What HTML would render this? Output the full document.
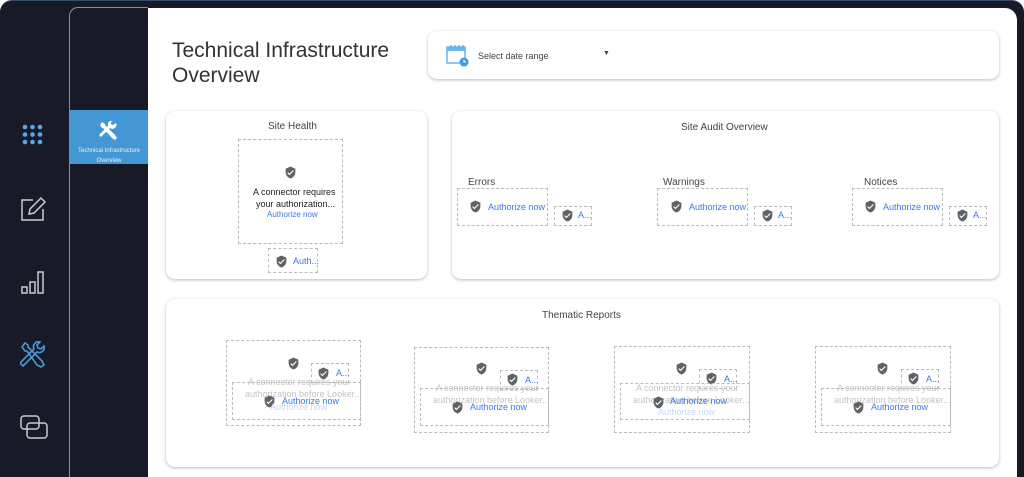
<!DOCTYPE html>
<html><head><meta charset="utf-8"><style>
*{margin:0;padding:0;box-sizing:border-box}
html,body{width:1024px;height:477px;overflow:hidden}
body{background:#fff;font-family:"Liberation Sans",sans-serif;position:relative}
.frame{position:absolute;left:0;top:0;width:1024px;height:477px;background:#181a27;border-radius:12px 12px 0 0;border-top:1px solid #3a4a6a}
.sub{position:absolute;left:69px;top:7px;width:79px;height:470px;border-left:1.5px solid #8a8d96;border-top:1.5px solid #8a8d96;border-top-left-radius:9px;background:#181a27}
.main{position:absolute;left:148px;top:8px;width:869px;height:469px;background:#fff;border-top-right-radius:12px}
.tab{position:absolute;left:70px;top:110px;width:78px;height:54px;background:#4597d3;color:#e8f1fa;text-align:center;font-size:6px;line-height:10px}
.a{position:absolute}
.card{position:absolute;background:#fff;border-radius:9px;box-shadow:0 1px 3px rgba(0,0,0,.28)}
.t{position:absolute;font-size:10px;color:#444;white-space:nowrap}
.d{position:absolute;border:1px dashed #bbb}
.sh{position:absolute;width:13px;height:13px}
.lk{position:absolute;font-size:9px;color:#3b78e7;white-space:nowrap}
.fd{position:absolute;font-size:9px;color:#c4c4c4;white-space:nowrap}
</style></head><body>
<svg width="0" height="0" style="position:absolute"><defs><symbol id="s" viewBox="0 0 24 24"><path d="M12 1L3 5v6c0 5.55 3.840 10.74 9 12 5.16-1.26 9-6.45 9-12V5l-9-4z" fill="#5f6368"/><path d="M10 17l-4-4 1.41-1.41L10 14.17l6.59-6.59L18 9l-8 8z" fill="#fff"/></symbol></defs></svg>
<div class="frame"></div>
<div class="sub"></div>
<div class="main"></div>
<svg class="a" style="left:22px;top:124px" width="21" height="21"><g fill="#5aa8e8"><circle cx="3" cy="3" r="2.3"/><circle cx="10.5" cy="3" r="2.3"/><circle cx="18" cy="3" r="2.3"/><circle cx="3" cy="10.5" r="2.3"/><circle cx="10.5" cy="10.5" r="2.3"/><circle cx="18" cy="10.5" r="2.3"/><circle cx="3" cy="18" r="2.3"/><circle cx="10.5" cy="18" r="2.3"/><circle cx="18" cy="18" r="2.3"/></g></svg>
<svg class="a" style="left:20px;top:196px" width="27" height="26" fill="none" stroke="#c9cbd0" stroke-width="1.5"><path d="M13 4H2v20h21V13"/><path d="M9 18l1-5L21 2l4 4-11 11z"/></svg>
<svg class="a" style="left:21px;top:270px" width="25" height="25" fill="none" stroke="#c9cbd0" stroke-width="1.5"><rect x="1" y="17" width="5" height="6"/><rect x="9" y="12" width="5" height="11"/><rect x="17" y="2" width="5" height="21"/></svg>
<svg class="a" style="left:20px;top:341px" width="27" height="27" fill="none" stroke="#4a9ad8" stroke-width="1.6"><path d="M3 25l14-14a5 5 0 0 0 7-6l-3 3-3-1-1-3 3-3a5 5 0 0 0-6 7L0 22z"/><path d="M2 6l3-4 3 2v2l14 14 2 4-3 2-4-2L7 10H5z"/></svg>
<svg class="a" style="left:20px;top:415px" width="28" height="25" fill="none" stroke="#c9cbd0" stroke-width="1.5"><rect x="1" y="1" width="18" height="13" rx="3"/><rect x="7" y="8" width="20" height="15" rx="3"/></svg>
<div class="tab"><svg style="margin-top:11px" width="20" height="20" fill="#fff"><path d="M2 16l9-9a4 4 0 0 0 6-5l-3 2-2-1 0-2 2-1a4 4 0 0 0-5 5L0 14z"/><path d="M1 4l2-3 3 2v1l10 10 2 3-2 2-3-2L4 7H3z"/></svg><div style="margin-top:1px">Technical Infrastructure<br>Overview</div></div>
<div class="a" style="left:172px;top:38px;font-size:21px;line-height:25px;color:#333">Technical Infrastructure<br>Overview</div>
<div class="card" style="left:428px;top:31px;width:571px;height:48px"></div>
<svg class="a" style="left:446px;top:43px" width="24" height="24"><rect x="1" y="4" width="18" height="16" fill="#fff" stroke="#6ab4f0" stroke-width="1.5"/><rect x="1" y="4" width="18" height="4" fill="#6ab4f0"/><g stroke="#6ab4f0" stroke-width="1.5"><path d="M5 2v3M9 2v3M13 2v3M17 2v3"/></g><circle cx="18" cy="19" r="4.5" fill="#3c9be8"/><path d="M18 16.5v2.5h2" stroke="#fff" stroke-width="1" fill="none"/></svg>
<div class="t" style="left:478px;top:51px;font-size:9px">Select date range</div>
<div class="t" style="left:603px;top:50px;font-size:7px">▼</div>
<div class="card" style="left:166px;top:111px;width:261px;height:168px"></div>
<div class="t" style="left:268px;top:121px">Site Health</div>
<div class="d" style="left:238px;top:139px;width:105px;height:105px"></div>
<svg class="sh" style="left:284px;top:166px"><use href="#s"/></svg>
<div class="t" style="left:253px;top:186px;font-size:9px;text-align:center;line-height:12px;color:#222">A connector requires<br>&nbsp;your authorization...</div>
<div class="lk" style="left:267px;top:210px;font-size:8px">Authorize now</div>
<div class="d" style="left:268px;top:248px;width:50px;height:25px"></div>
<svg class="sh" style="left:275px;top:255px"><use href="#s"/></svg>
<div class="lk" style="left:293px;top:256px">Auth...</div>
<div class="card" style="left:452px;top:111px;width:547px;height:168px"></div>
<div class="t" style="left:681px;top:122px">Site Audit Overview</div>
<div class="t" style="left:468px;top:177px">Errors</div>
<div class="t" style="left:663px;top:177px">Warnings</div>
<div class="t" style="left:864px;top:177px">Notices</div>
<div class="d" style="left:457px;top:188px;width:91px;height:38px"></div><svg class="sh" style="left:469px;top:200px"><use href="#s"/></svg><div class="lk" style="left:488px;top:202px">Authorize now</div>
<div class="d" style="left:554px;top:206px;width:38px;height:20px"></div><svg class="sh" style="left:561px;top:209px"><use href="#s"/></svg><div class="lk" style="left:578px;top:210px">A...</div>
<div class="d" style="left:657px;top:188px;width:91px;height:38px"></div><svg class="sh" style="left:670px;top:200px"><use href="#s"/></svg><div class="lk" style="left:689px;top:202px">Authorize now</div>
<div class="d" style="left:754px;top:206px;width:38px;height:20px"></div><svg class="sh" style="left:761px;top:209px"><use href="#s"/></svg><div class="lk" style="left:778px;top:210px">A...</div>
<div class="d" style="left:852px;top:188px;width:91px;height:38px"></div><svg class="sh" style="left:864px;top:200px"><use href="#s"/></svg><div class="lk" style="left:883px;top:202px">Authorize now</div>
<div class="d" style="left:949px;top:206px;width:38px;height:20px"></div><svg class="sh" style="left:956px;top:209px"><use href="#s"/></svg><div class="lk" style="left:973px;top:210px">A...</div>
<div class="card" style="left:166px;top:299px;width:833px;height:168px"></div>
<div class="t" style="left:542px;top:310px">Thematic Reports</div>

<div class="d" style="left:226px;top:340px;width:135px;height:86px"></div>
<svg class="sh" style="left:287px;top:357px"><use href="#s"/></svg>
<div class="d" style="left:311px;top:363px;width:38px;height:20px"></div><svg class="sh" style="left:317px;top:367px"><use href="#s"/></svg><div class="lk" style="left:336px;top:368px">A...</div>
<div class="fd" style="left:248px;top:377px">A connector requires your</div>
<div class="fd" style="left:245px;top:389px">authorization before Looker...</div>
<div class="d" style="left:232px;top:382px;width:129px;height:38px"></div>
<svg class="sh" style="left:263px;top:395px"><use href="#s"/></svg><div class="lk" style="left:282px;top:396px">Authorize now</div>
<div class="fd" style="left:270px;top:402px;color:#c8d8f5">Authorize now</div>

<div class="d" style="left:414px;top:347px;width:135px;height:86px"></div>
<svg class="sh" style="left:475px;top:362px"><use href="#s"/></svg>
<div class="d" style="left:500px;top:370px;width:38px;height:20px"></div><svg class="sh" style="left:506px;top:373px"><use href="#s"/></svg><div class="lk" style="left:525px;top:375px">A...</div>
<div class="fd" style="left:436px;top:383px">A connector requires your</div>
<div class="fd" style="left:433px;top:395px">authorization before Looker...</div>
<div class="d" style="left:420px;top:388px;width:129px;height:38px"></div>
<svg class="sh" style="left:451px;top:401px"><use href="#s"/></svg><div class="lk" style="left:470px;top:402px">Authorize now</div>

<div class="d" style="left:614px;top:346px;width:136px;height:87px"></div>
<svg class="sh" style="left:675px;top:362px"><use href="#s"/></svg>
<div class="d" style="left:699px;top:369px;width:38px;height:20px"></div><svg class="sh" style="left:705px;top:372px"><use href="#s"/></svg><div class="lk" style="left:724px;top:374px">A...</div>
<div class="fd" style="left:636px;top:383px">A connector requires your</div>
<div class="fd" style="left:633px;top:395px">authorization before Looker...</div>
<div class="d" style="left:620px;top:383px;width:130px;height:37px"></div>
<svg class="sh" style="left:652px;top:396px"><use href="#s"/></svg><div class="lk" style="left:670px;top:396px">Authorize now</div>
<div class="fd" style="left:658px;top:407px;color:#c8d8f5">Authorize now</div>

<div class="d" style="left:815px;top:346px;width:136px;height:87px"></div>
<svg class="sh" style="left:876px;top:362px"><use href="#s"/></svg>
<div class="d" style="left:901px;top:369px;width:38px;height:20px"></div><svg class="sh" style="left:907px;top:372px"><use href="#s"/></svg><div class="lk" style="left:926px;top:374px">A...</div>
<div class="fd" style="left:837px;top:383px">A connector requires your</div>
<div class="fd" style="left:834px;top:395px">authorization before Looker...</div>
<div class="d" style="left:821px;top:388px;width:130px;height:38px"></div>
<svg class="sh" style="left:852px;top:401px"><use href="#s"/></svg><div class="lk" style="left:871px;top:402px">Authorize now</div>
</body></html>
